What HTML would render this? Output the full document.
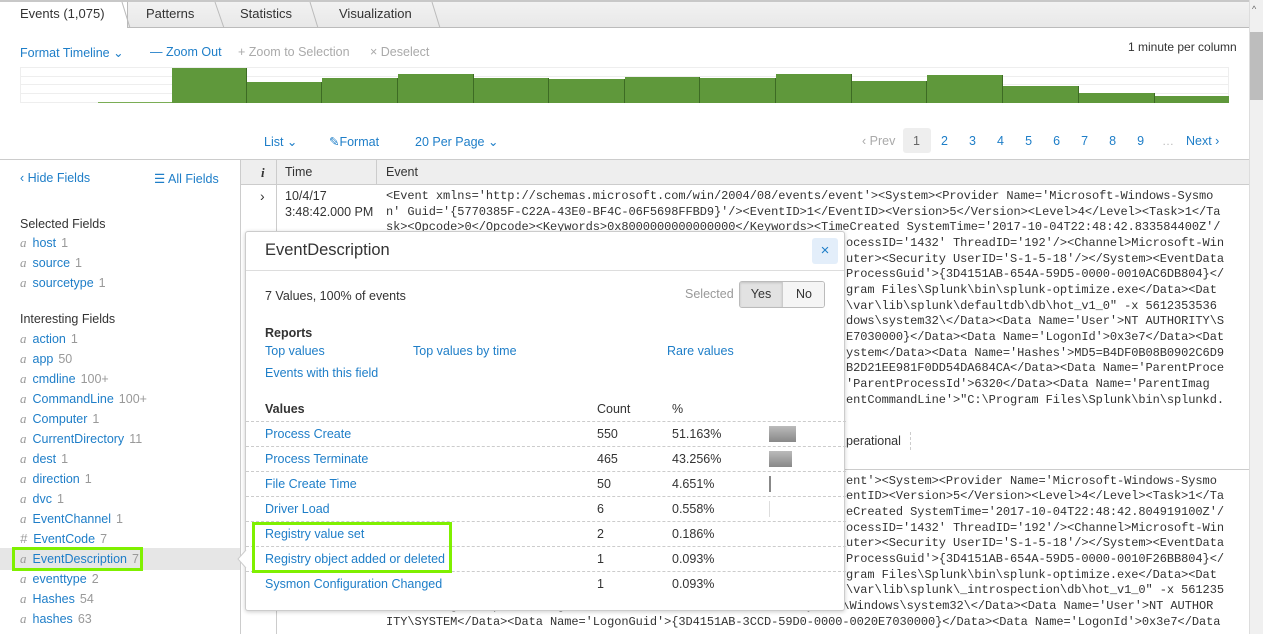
<!DOCTYPE html>
<html><head><meta charset="utf-8">
<style>
*{box-sizing:border-box;margin:0;padding:0}
body{width:1263px;height:634px;overflow:hidden;background:#fff;font-family:"Liberation Sans",sans-serif;font-size:12px;color:#333;position:relative}
.a{position:absolute;white-space:nowrap}
.lk{color:#1e7ec8}
.gr{color:#999}
.mono{font-family:"Liberation Mono",monospace;font-size:12px;letter-spacing:-0.07px;color:#333;position:absolute;white-space:pre;left:386px}
.tab{position:absolute;top:0;height:28px;line-height:28px;font-size:13px;color:#333}
.bar{position:absolute;bottom:0;background:#5f983b;border-right:1px solid #3d6b24}
.f{position:absolute;left:20px;font-size:12.5px;white-space:nowrap}
.f i{font-family:"Liberation Serif",serif;color:#999;margin-right:6px;font-size:13px}
.f b{font-weight:normal;color:#999;margin-left:5px}
.row{position:absolute;left:0;width:600px;height:25px;border-top:1px dashed #ccc;font-size:12.5px;line-height:25px}
.row span{position:absolute}
</style></head><body>
<div class="a" style="left:0;top:0;width:1249px;height:28px;background:linear-gradient(#f2f2f2,#e8e8e8);border-top:2px solid #c8c8c8;border-bottom:1px solid #bbb"></div>
<div class="a" style="left:0;top:2px;width:128px;height:26px;background:#fff;border-right:1px solid #bbb"></div>
<svg class="a" style="left:0;top:0" width="450" height="28"><path d="M122 2 L130 28 M215 2 L224 28 M310 2 L318 28 M432 2 L440 28" stroke="#bbb" fill="none"/></svg>
<div class="tab" style="left:20px">Events (1,075)</div>
<div class="tab" style="left:146px">Patterns</div>
<div class="tab" style="left:240px">Statistics</div>
<div class="tab" style="left:339px">Visualization</div>
<div class="a" style="left:1249px;top:0;width:14px;height:634px;background:#f0f0f0;border-left:1px solid #ddd"></div>
<div class="a" style="left:1250px;top:32px;width:13px;height:68px;background:#bdbdbd"></div>
<div class="a" style="left:1252px;top:4px;font-size:9px;color:#666">^</div>

<div class="a lk" style="left:20px;top:45px;font-size:12.5px">Format Timeline ⌄</div>
<div class="a lk" style="left:150px;top:45px;font-size:12.5px">— Zoom Out</div>
<div class="a" style="left:238px;top:45px;font-size:12.5px;color:#aaa">+ Zoom to Selection</div>
<div class="a" style="left:370px;top:45px;font-size:12.5px;color:#aaa">× Deselect</div>
<div class="a" style="left:1128px;top:40px;font-size:12px;color:#333">1 minute per column</div>
<div class="a" style="left:20px;top:67px;width:1209px;height:36px;border:1px solid #eee">
 <div class="a" style="left:0;top:8px;width:100%;border-top:1px solid #eee"></div>
 <div class="a" style="left:0;top:16px;width:100%;border-top:1px solid #eee"></div>
 <div class="a" style="left:0;top:25px;width:100%;border-top:1px solid #eee"></div>
</div>
<div class="a" style="left:20px;top:68px;width:1209px;height:35px">
 <div class="bar" style="left:78px;width:74px;height:1px;background:#7aad55;border:none"></div>
 <div class="bar" style="left:152px;width:75px;height:35px"></div>
 <div class="bar" style="left:227px;width:75px;height:21px"></div>
 <div class="bar" style="left:302px;width:76px;height:25px"></div>
 <div class="bar" style="left:378px;width:76px;height:29px"></div>
 <div class="bar" style="left:454px;width:75px;height:25px"></div>
 <div class="bar" style="left:529px;width:76px;height:24px"></div>
 <div class="bar" style="left:605px;width:75px;height:26px"></div>
 <div class="bar" style="left:680px;width:76px;height:25px"></div>
 <div class="bar" style="left:756px;width:76px;height:29px"></div>
 <div class="bar" style="left:832px;width:75px;height:22px"></div>
 <div class="bar" style="left:907px;width:76px;height:28px"></div>
 <div class="bar" style="left:983px;width:76px;height:17px"></div>
 <div class="bar" style="left:1059px;width:76px;height:10px"></div>
 <div class="bar" style="left:1135px;width:74px;height:7px;border:none"></div>
</div>

<div class="a lk" style="left:264px;top:134px;font-size:12.5px">List ⌄</div>
<div class="a lk" style="left:329px;top:134px;font-size:12.5px">✎Format</div>
<div class="a lk" style="left:415px;top:134px;font-size:12.5px">20 Per Page ⌄</div>
<div class="a" style="left:862px;top:134px;font-size:12.5px;color:#aaa">‹ Prev</div>
<div class="a" style="left:903px;top:128px;width:28px;height:25px;background:#eee;border-radius:3px"></div>
<div class="a" style="left:913px;top:134px;font-size:12.5px;color:#666">1</div>
<div class="a lk" style="left:941px;top:134px;font-size:12.5px;word-spacing:17.6px">2 3 4 5 6 7 8 9</div>
<div class="a" style="left:1162px;top:134px;color:#bbb">…</div>
<div class="a lk" style="left:1186px;top:134px;font-size:12.5px">Next ›</div>

<div class="a" style="left:0;top:159px;width:1249px;border-top:1px solid #ccc"></div>
<div class="a" style="left:240px;top:159px;width:1px;height:475px;background:#ccc"></div>
<div class="a" style="left:241px;top:160px;width:1008px;height:25px;background:#eee;border-bottom:1px solid #ccc"></div>
<div class="a" style="left:261px;top:165px;font-family:'Liberation Serif',serif;font-style:italic;font-weight:bold;font-size:13px">i</div>
<div class="a" style="left:276px;top:160px;width:1px;height:474px;background:#ccc"></div>
<div class="a" style="left:285px;top:165px;font-size:12.5px">Time</div>
<div class="a" style="left:376px;top:160px;width:1px;height:25px;background:#ccc"></div>
<div class="a" style="left:386px;top:165px;font-size:12.5px">Event</div>

<div class="a lk" style="left:20px;top:171px;font-size:12.5px">‹ Hide Fields</div>
<div class="a lk" style="left:154px;top:171px;font-size:12.5px">☰ All Fields</div>
<div class="f" style="top:217px">Selected Fields</div>
<div class="f" style="top:235px"><i>a</i><span class="lk">host</span><b>1</b></div>
<div class="f" style="top:255px"><i>a</i><span class="lk">source</span><b>1</b></div>
<div class="f" style="top:275px"><i>a</i><span class="lk">sourcetype</span><b>1</b></div>
<div class="f" style="top:312px">Interesting Fields</div>
<div class="f" style="top:331px"><i>a</i><span class="lk">action</span><b>1</b></div>
<div class="f" style="top:351px"><i>a</i><span class="lk">app</span><b>50</b></div>
<div class="f" style="top:371px"><i>a</i><span class="lk">cmdline</span><b>100+</b></div>
<div class="f" style="top:391px"><i>a</i><span class="lk">CommandLine</span><b>100+</b></div>
<div class="f" style="top:411px"><i>a</i><span class="lk">Computer</span><b>1</b></div>
<div class="f" style="top:431px"><i>a</i><span class="lk">CurrentDirectory</span><b>11</b></div>
<div class="f" style="top:451px"><i>a</i><span class="lk">dest</span><b>1</b></div>
<div class="f" style="top:471px"><i>a</i><span class="lk">direction</span><b>1</b></div>
<div class="f" style="top:491px"><i>a</i><span class="lk">dvc</span><b>1</b></div>
<div class="f" style="top:511px"><i>a</i><span class="lk">EventChannel</span><b>1</b></div>
<div class="f" style="top:531px"><i style="font-family:'Liberation Sans'">#</i><span class="lk">EventCode</span><b>7</b></div>
<div class="a" style="left:0;top:548px;width:240px;height:22px;background:#e6e6e6"></div>
<div class="a" style="left:12px;top:547px;width:131px;height:24px;border:3px solid #7ff000"></div>
<div class="f" style="top:551px"><i>a</i><span class="lk">EventDescription</span><b>7</b></div>
<div class="f" style="top:571px"><i>a</i><span class="lk">eventtype</span><b>2</b></div>
<div class="f" style="top:591px"><i>a</i><span class="lk">Hashes</span><b>54</b></div>
<div class="f" style="top:611px"><i>a</i><span class="lk">hashes</span><b>63</b></div>

<div class="a" style="left:260px;top:188px;font-size:14px">›</div>
<div class="a" style="left:285px;top:189px;font-size:12.5px">10/4/17</div>
<div class="a" style="left:285px;top:205px;font-size:12.5px">3:48:42.000 PM</div>
<div class="mono" style="top:189px">&lt;Event xmlns='http://schemas.microsoft.com/win/2004/08/events/event'&gt;&lt;System&gt;&lt;Provider Name='Microsoft-Windows-Sysmo</div>
<div class="mono" style="top:205px">n' Guid='{5770385F-C22A-43E0-BF4C-06F5698FFBD9}'/&gt;&lt;EventID&gt;1&lt;/EventID&gt;&lt;Version&gt;5&lt;/Version&gt;&lt;Level&gt;4&lt;/Level&gt;&lt;Task&gt;1&lt;/Ta</div>
<div class="mono" style="top:220px">sk&gt;&lt;Opcode&gt;0&lt;/Opcode&gt;&lt;Keywords&gt;0x8000000000000000&lt;/Keywords&gt;&lt;TimeCreated SystemTime='2017-10-04T22:48:42.833584400Z'/</div>
<div class="mono" style="top:236px;left:846px">ocessID='1432' ThreadID='192'/&gt;&lt;Channel&gt;Microsoft-Win</div>
<div class="mono" style="top:252px;left:846px">uter&gt;&lt;Security UserID='S-1-5-18'/&gt;&lt;/System&gt;&lt;EventData</div>
<div class="mono" style="top:267px;left:846px">ProcessGuid'&gt;{3D4151AB-654A-59D5-0000-0010AC6DB804}&lt;/</div>
<div class="mono" style="top:283px;left:846px">gram Files\Splunk\bin\splunk-optimize.exe&lt;/Data&gt;&lt;Dat</div>
<div class="mono" style="top:299px;left:846px">\var\lib\splunk\defaultdb\db\hot_v1_0" -x 5612353536</div>
<div class="mono" style="top:314px;left:846px">dows\system32\&lt;/Data&gt;&lt;Data Name='User'&gt;NT AUTHORITY\S</div>
<div class="mono" style="top:330px;left:846px">E7030000}&lt;/Data&gt;&lt;Data Name='LogonId'&gt;0x3e7&lt;/Data&gt;&lt;Dat</div>
<div class="mono" style="top:346px;left:846px">ystem&lt;/Data&gt;&lt;Data Name='Hashes'&gt;MD5=B4DF0B08B0902C6D9</div>
<div class="mono" style="top:361px;left:846px">B2D21EE981F0DD54DA684CA&lt;/Data&gt;&lt;Data Name='ParentProce</div>
<div class="mono" style="top:377px;left:846px">'ParentProcessId'&gt;6320&lt;/Data&gt;&lt;Data Name='ParentImag</div>
<div class="mono" style="top:393px;left:846px">entCommandLine'&gt;"C:\Program Files\Splunk\bin\splunkd.</div>
<div class="a" style="left:846px;top:434px;font-size:12.5px">perational</div>
<div class="a" style="left:910px;top:432px;height:18px;border-left:1px dashed #ccc"></div>
<div class="a" style="left:277px;top:469px;width:972px;border-top:1px solid #ccc"></div>
<div class="mono" style="top:474px;left:846px">ent'&gt;&lt;System&gt;&lt;Provider Name='Microsoft-Windows-Sysmo</div>
<div class="mono" style="top:489px;left:846px">entID&gt;&lt;Version&gt;5&lt;/Version&gt;&lt;Level&gt;4&lt;/Level&gt;&lt;Task&gt;1&lt;/Ta</div>
<div class="mono" style="top:505px;left:846px">eCreated SystemTime='2017-10-04T22:48:42.804919100Z'/</div>
<div class="mono" style="top:521px;left:846px">ocessID='1432' ThreadID='192'/&gt;&lt;Channel&gt;Microsoft-Win</div>
<div class="mono" style="top:536px;left:846px">uter&gt;&lt;Security UserID='S-1-5-18'/&gt;&lt;/System&gt;&lt;EventData</div>
<div class="mono" style="top:552px;left:846px">ProcessGuid'&gt;{3D4151AB-654A-59D5-0000-0010F26BB804}&lt;/</div>
<div class="mono" style="top:568px;left:846px">gram Files\Splunk\bin\splunk-optimize.exe&lt;/Data&gt;&lt;Dat</div>
<div class="mono" style="top:583px;left:846px">\var\lib\splunk\_introspection\db\hot_v1_0" -x 561235</div>
<div class="mono" style="top:599px">5536" -log-to-splunkd-log&lt;/Data&gt;&lt;Data Name='CurrentDirectory'&gt;C:\Windows\system32\&lt;/Data&gt;&lt;Data Name='User'&gt;NT AUTHOR</div>
<div class="mono" style="top:615px">ITY\SYSTEM&lt;/Data&gt;&lt;Data Name='LogonGuid'&gt;{3D4151AB-3CCD-59D0-0000-0020E7030000}&lt;/Data&gt;&lt;Data Name='LogonId'&gt;0x3e7&lt;/Data</div>

<div class="a" style="left:245px;top:231px;width:600px;height:380px;background:#fff;border:1px solid #ccc;border-radius:3px;box-shadow:0 1px 4px rgba(0,0,0,.2)">
 <div class="a" style="left:19px;top:9px;font-size:16.5px;color:#333">EventDescription</div>
 <div class="a" style="left:566px;top:6px;width:26px;height:26px;background:#e3eefa;border-radius:3px;color:#1e7ec8;font-size:15px;text-align:center;line-height:25px">×</div>
 <div class="a" style="left:0;top:38px;width:598px;border-top:1px solid #ddd"></div>
 <div class="a" style="left:19px;top:57px;font-size:12.5px">7 Values, 100% of events</div>
 <div class="a" style="left:439px;top:55px;font-size:12.5px;color:#999">Selected</div>
 <div class="a" style="left:493px;top:49px;width:86px;height:27px;border:1px solid #bbb;border-radius:3px;overflow:hidden;font-size:12.5px;line-height:25px">
  <div class="a" style="left:0;top:0;width:43px;height:25px;background:#e2e2e2;text-align:center;border-right:1px solid #ccc;box-shadow:inset 0 1px 2px rgba(0,0,0,.15)">Yes</div>
  <div class="a" style="left:43px;top:0;width:42px;height:25px;background:#f5f5f5;text-align:center">No</div>
 </div>
 <div class="a" style="left:19px;top:94px;font-size:12.5px;font-weight:bold">Reports</div>
 <div class="a lk" style="left:19px;top:112px;font-size:12.5px">Top values</div>
 <div class="a lk" style="left:167px;top:112px;font-size:12.5px">Top values by time</div>
 <div class="a lk" style="left:421px;top:112px;font-size:12.5px">Rare values</div>
 <div class="a lk" style="left:19px;top:134px;font-size:12.5px">Events with this field</div>
 <div class="a" style="left:19px;top:170px;font-size:12.5px;font-weight:bold">Values</div>
 <div class="a" style="left:351px;top:170px;font-size:12.5px">Count</div>
 <div class="a" style="left:426px;top:170px;font-size:12.5px">%</div>
 <div class="row" style="top:189px"><span class="lk" style="left:19px">Process Create</span><span style="left:351px">550</span><span style="left:426px">51.163%</span><span style="left:523px;top:4px;width:27px;height:16px;background:linear-gradient(#bbb,#888)"></span></div>
 <div class="row" style="top:214px"><span class="lk" style="left:19px">Process Terminate</span><span style="left:351px">465</span><span style="left:426px">43.256%</span><span style="left:523px;top:4px;width:23px;height:16px;background:linear-gradient(#bbb,#888)"></span></div>
 <div class="row" style="top:239px"><span class="lk" style="left:19px">File Create Time</span><span style="left:351px">50</span><span style="left:426px">4.651%</span><span style="left:523px;top:4px;width:2px;height:16px;background:#888"></span></div>
 <div class="row" style="top:264px"><span class="lk" style="left:19px">Driver Load</span><span style="left:351px">6</span><span style="left:426px">0.558%</span><span style="left:523px;top:4px;width:1px;height:16px;background:#ddd"></span></div>
 <div class="row" style="top:289px"><span class="lk" style="left:19px">Registry value set</span><span style="left:351px">2</span><span style="left:426px">0.186%</span></div>
 <div class="row" style="top:314px"><span class="lk" style="left:19px">Registry object added or deleted</span><span style="left:351px">1</span><span style="left:426px">0.093%</span></div>
 <div class="row" style="top:339px"><span class="lk" style="left:19px">Sysmon Configuration Changed</span><span style="left:351px">1</span><span style="left:426px">0.093%</span></div>
 <div class="a" style="left:6px;top:290px;width:200px;height:51px;border:3px solid #7ff000"></div>
</div>
<svg class="a" style="left:237px;top:550px" width="10" height="18"><path d="M9 0 L1 9 L9 18" fill="#fff" stroke="#ccc"/></svg>
</body></html>
